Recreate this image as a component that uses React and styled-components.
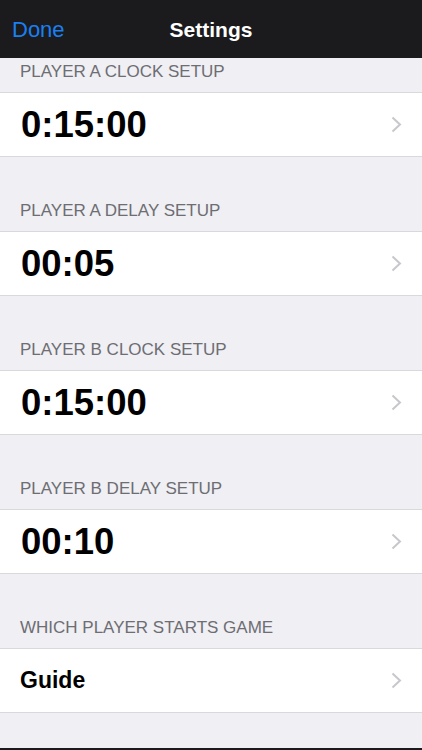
import React from 'react';
import styled, { createGlobalStyle } from 'styled-components';

const GlobalStyle = createGlobalStyle`
  html, body {
    margin: 0;
    padding: 0;
    background: #efeff4;
    font-family: "Liberation Sans", Arial, sans-serif;
  }
`;

const Screen = styled.div`
  width: 422px;
  height: 750px;
  display: flex;
  flex-direction: column;
  background: #efeff4;
  overflow: hidden;
`;

const NavBar = styled.div`
  height: 58px;
  flex-shrink: 0;
  background: #1b1b1d;
  display: grid;
  grid-template-columns: 1fr auto 1fr;
  align-items: center;
  padding: 0 12px;
  box-sizing: border-box;
`;

const DoneButton = styled.button`
  justify-self: start;
  background: none;
  border: none;
  padding: 0;
  color: #1a7ff0;
  font-family: inherit;
  font-size: 22px;
  margin-top: 1px;
`;

const Title = styled.div`
  color: #ffffff;
  font-size: 21px;
  font-weight: 700;
  margin-top: 1px;
`;

const List = styled.div`
  flex: 1;
  display: flex;
  flex-direction: column;
`;

const SectionHeader = styled.div`
  height: ${props => (props.$first ? 34 : 74)}px;
  display: flex;
  align-items: flex-end;
  padding: 0 20px 10px;
  box-sizing: border-box;
  color: #6d6d72;
  font-size: 17px;
  text-transform: uppercase;
`;

const Row = styled.div`
  height: 65px;
  display: flex;
  align-items: center;
  justify-content: space-between;
  padding: 0 20px;
  box-sizing: border-box;
  background: #ffffff;
  border-top: 1px solid #d9d9dd;
  border-bottom: 1px solid #d9d9dd;
`;

const Value = styled.span`
  color: #000000;
  font-weight: 700;
  font-size: ${props => (props.$small ? 23 : 36.5)}px;
  margin-left: ${props => (props.$small ? 0 : 1)}px;
`;

const BottomEdge = styled.div`
  margin-top: auto;
  height: 2px;
  background: #1b1b1d;
`;

const Chevron = () => (
  <svg width="11" height="17" viewBox="0 0 11 17">
    <path d="M1.5 1.5 L9 8.5 L1.5 15.5" fill="none" stroke="#c7c7cc" strokeWidth="2" />
  </svg>
);

const sections = [
  { label: 'Player A Clock Setup', value: '0:15:00' },
  { label: 'Player A Delay Setup', value: '00:05' },
  { label: 'Player B Clock Setup', value: '0:15:00' },
  { label: 'Player B Delay Setup', value: '00:10' },
  { label: 'Which Player Starts Game', value: 'Guide', small: true },
];

const App = () => {
  return (
    <Screen>
      <GlobalStyle />
      <NavBar>
        <DoneButton>Done</DoneButton>
        <Title>Settings</Title>
        <span />
      </NavBar>
      <List>
        {sections.map((s, i) => (
          <React.Fragment key={s.label}>
            <SectionHeader $first={i === 0}>{s.label}</SectionHeader>
            <Row>
              <Value $small={s.small}>{s.value}</Value>
              <Chevron />
            </Row>
          </React.Fragment>
        ))}
        <BottomEdge />
      </List>
    </Screen>
  );
};

export default App;
